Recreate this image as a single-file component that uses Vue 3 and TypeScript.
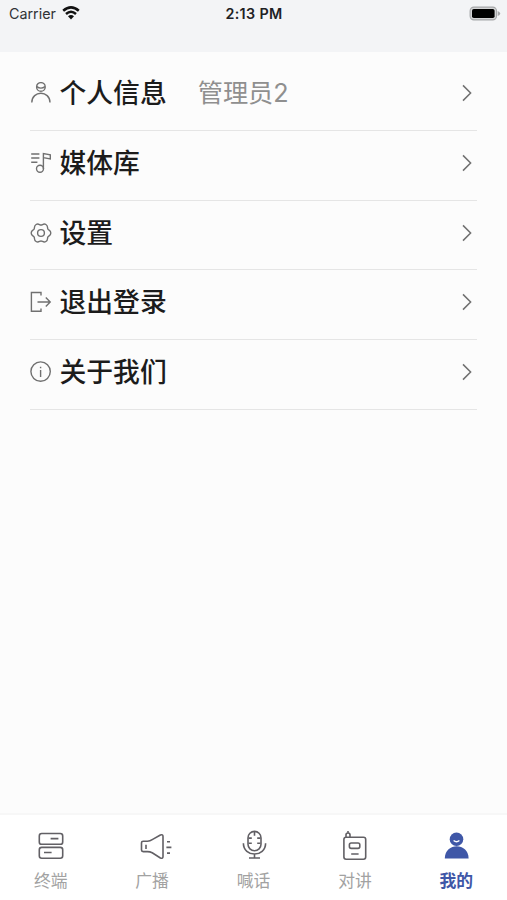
<script setup lang="ts">
import { ref } from 'vue'

type IconName = 'user' | 'music' | 'gear' | 'exit' | 'info'
type TabName = 'terminal' | 'broadcast' | 'shout' | 'intercom' | 'mine'

interface MenuItem {
  icon: IconName
  label: string
  value?: string
}

interface Tab {
  name: TabName
  label: string
}

const menu: MenuItem[] = [
  { icon: 'user', label: '个人信息', value: '管理员2' },
  { icon: 'music', label: '媒体库' },
  { icon: 'gear', label: '设置' },
  { icon: 'exit', label: '退出登录' },
  { icon: 'info', label: '关于我们' },
]

const tabs: Tab[] = [
  { name: 'terminal', label: '终端' },
  { name: 'broadcast', label: '广播' },
  { name: 'shout', label: '喊话' },
  { name: 'intercom', label: '对讲' },
  { name: 'mine', label: '我的' },
]

const active = ref<TabName>('mine')
</script>

<template>
  <div class="screen">
    <header class="status">
      <div class="carrier">
        <span>Carrier</span>
        <svg class="wifi" viewBox="0 0 18 14">
          <path d="M1.2 4.8Q9-2 16.8 4.8" />
          <path d="M4 8Q9 3.6 14 8" />
          <path class="dot" d="M6 10.3Q9 7.8 12 10.3L9 13.5Z" />
        </svg>
      </div>
      <div class="time">2:13 PM</div>
      <div class="battery-wrap">
        <svg class="battery" viewBox="0 0 32 15">
          <rect x="1.1" y="1.1" width="26.4" height="12.8" rx="3.8" fill="#d4d5d6" stroke="#a6a7a9" stroke-width="1.1" />
          <rect x="3" y="3" width="22.6" height="9" rx="1.8" fill="#000" />
          <path d="M28.7 5Q31.2 6 31.2 7.5T28.7 10Z" fill="#a6a7a9" />
        </svg>
      </div>
    </header>

    <main class="menu">
      <div v-for="item in menu" :key="item.icon" class="row">
        <svg class="icon" viewBox="0 0 22 22">
          <g v-if="item.icon === 'user'">
            <circle cx="10.9" cy="4.9" r="4.3" />
            <path d="M6.8 4.6Q10.9 7.6 15 4.6M1.8 20.6C1.8 8.2 20 8.2 20 20.6" />
          </g>
          <g v-else-if="item.icon === 'music'">
            <path d="M1.2 2H9.4M1.2 6H9.4M1.2 10.2H7.4M13.4 17V1.6L20.3 2.8V7L13.4 5.6" />
            <circle cx="10" cy="16.8" r="3.5" />
          </g>
          <g v-else-if="item.icon === 'gear'">
            <path
              v-for="lobe in 6"
              :key="lobe"
              d="M17.9 7C18.7 8.4 20.8 8.2 20.8 11C20.8 13.8 18.7 13.6 17.9 15"
              :transform="`rotate(${lobe * 60} 11 11)`"
            />
            <circle cx="11" cy="11" r="3.4" />
          </g>
          <g v-else-if="item.icon === 'exit'">
            <path d="M11 4.4V1.5H1.4V20.3H11V17.4M7.5 11H20.2M15.8 6.6L20.2 11L15.8 15.4" />
          </g>
          <g v-else>
            <circle cx="10.6" cy="10.6" r="9.7" />
            <path d="M10.6 9V16M10.6 5.8V7.3" />
          </g>
        </svg>
        <span class="label">{{ item.label }}</span>
        <span v-if="item.value" class="value">{{ item.value }}</span>
        <svg class="chevron" viewBox="0 0 10 18"><path d="M1 1.4L8.6 9L1 16.6" /></svg>
      </div>
    </main>

    <nav class="tabs">
      <button
        v-for="tab in tabs"
        :key="tab.name"
        type="button"
        class="tab"
        :class="{ active: tab.name === active }"
        @click="active = tab.name"
      >
        <svg class="tab-icon" viewBox="0 0 36 32">
          <g v-if="tab.name === 'terminal'">
            <rect x="6.3" y="3.5" width="23.4" height="10.8" rx="2.4" />
            <rect x="6.3" y="17.4" width="23.4" height="10.8" rx="2.4" />
            <path d="M17.6 8.6H25.4M11 22.5H18.6" />
          </g>
          <g v-else-if="tab.name === 'broadcast'">
            <path d="M9.2 11.2H13.5Q16 11.2 18.2 9.6L26.4 5Q29 4 29 6.4V26.6Q29 29 26.4 28L18.2 22.8Q16 21.6 13.5 21.6H9.2Q7.5 21.6 7.5 20V12.8Q7.5 11.2 9.2 11.2ZM12 14.7V19" />
            <path d="M33 11.7H36M32.4 17.4H37.4M33 23.1H36" />
          </g>
          <g v-else-if="tab.name === 'shout'">
            <rect x="12" y="1.4" width="13" height="19.4" rx="6.5" />
            <path d="M7.4 13.2C7.4 27.6 29.6 27.6 29.6 13.2M18.5 24.2V27.9M13 28H24M18.5 2V5.8M12.5 8.1H15.8M21.2 8.1H24.5M12.5 13.3H15.8M21.2 13.3H24.5" />
          </g>
          <g v-else-if="tab.name === 'intercom'">
            <rect x="6.9" y="7.2" width="21.8" height="22" rx="2.2" />
            <rect x="12.4" y="13" width="10.4" height="5.4" rx="1.8" />
            <path d="M14.2 24H21.6M9 7V4.8Q9 3 11 3T13 4.8V7M11 1V3" />
          </g>
          <g v-else>
            <circle class="solid" cx="18.5" cy="9.2" r="6.8" />
            <path class="solid" d="M6.8 28.4C7 12.3 30.4 12.3 30.6 28.4Z" />
            <path class="smile" d="M15.6 10.5Q18.5 13 21.4 10.5" />
          </g>
        </svg>
        <span class="tab-label">{{ tab.label }}</span>
      </button>
    </nav>
  </div>
</template>

<style>
body {
  margin: 0;
}
</style>

<style scoped>
.screen {
  box-sizing: border-box;
  display: flex;
  flex-direction: column;
  width: 100%;
  height: 100vh;
  overflow: hidden;
  background: #fcfcfc;
  font-family: Inter, 'Noto Sans CJK SC', sans-serif;
}

.status {
  box-sizing: border-box;
  display: grid;
  grid-template-columns: 1fr auto 1fr;
  align-items: start;
  flex: none;
  height: 52px;
  padding: 4px 6px 0 9px;
  background: #f3f4f6;
  font-size: 14.3px;
  line-height: 20px;
  color: #303235;
}

.carrier {
  display: flex;
  gap: 6px;
}

.wifi {
  width: 18px;
  height: 14px;
  margin-top: 2px;
  fill: none;
  stroke: #111;
  stroke-width: 2.5;
}

.wifi .dot {
  fill: #111;
  stroke: none;
}

.time {
  margin-right: 2px;
  font-weight: 600;
  letter-spacing: 0.35px;
  color: #202124;
}

.battery-wrap {
  display: flex;
  justify-content: flex-end;
}

.battery {
  width: 32px;
  height: 15px;
  margin-top: 1.5px;
}

.menu {
  flex: 1;
  padding: 9.4px 30px 0;
}

.row {
  box-sizing: border-box;
  display: flex;
  align-items: center;
  height: 69.7px;
  padding: 0 5px 5px 0;
  border-bottom: 1px solid #e5e5e5;
}

.icon {
  flex: none;
  width: 22px;
  height: 22px;
  fill: none;
  stroke: #707070;
  stroke-width: 1.4;
}

.label {
  margin-left: 7.5px;
  font-size: 26.8px;
  font-weight: 500;
  line-height: 40px;
  color: #1c1c1c;
}

.value {
  margin-left: 31px;
  font-size: 25.2px;
  line-height: 40px;
  color: #8f8f8f;
}

.chevron {
  width: 10px;
  height: 18px;
  margin-left: auto;
  fill: none;
  stroke: #707070;
  stroke-width: 1.5;
}

.tabs {
  box-sizing: border-box;
  display: flex;
  flex: none;
  height: 87px;
  border-top: 2px solid #f7f7f7;
  background: #fff;
}

.tab {
  display: flex;
  flex: 1;
  flex-direction: column;
  align-items: center;
  gap: 7px;
  padding: 15px 0 0;
  border: 0;
  background: none;
  font: inherit;
  color: #a2a2a2;
}

.tab-icon {
  width: 36px;
  height: 32px;
  overflow: visible;
  fill: none;
  stroke: #626065;
  stroke-width: 1.6;
  stroke-linejoin: round;
}

.tab-icon .solid {
  fill: #3f57a7;
  stroke: none;
}

.tab-icon .smile {
  stroke: #fff;
  stroke-width: 1.4;
}

.tab-label {
  font-size: 16.8px;
  line-height: 24px;
}

.active {
  font-weight: 600;
  color: #3f57a7;
}
</style>
